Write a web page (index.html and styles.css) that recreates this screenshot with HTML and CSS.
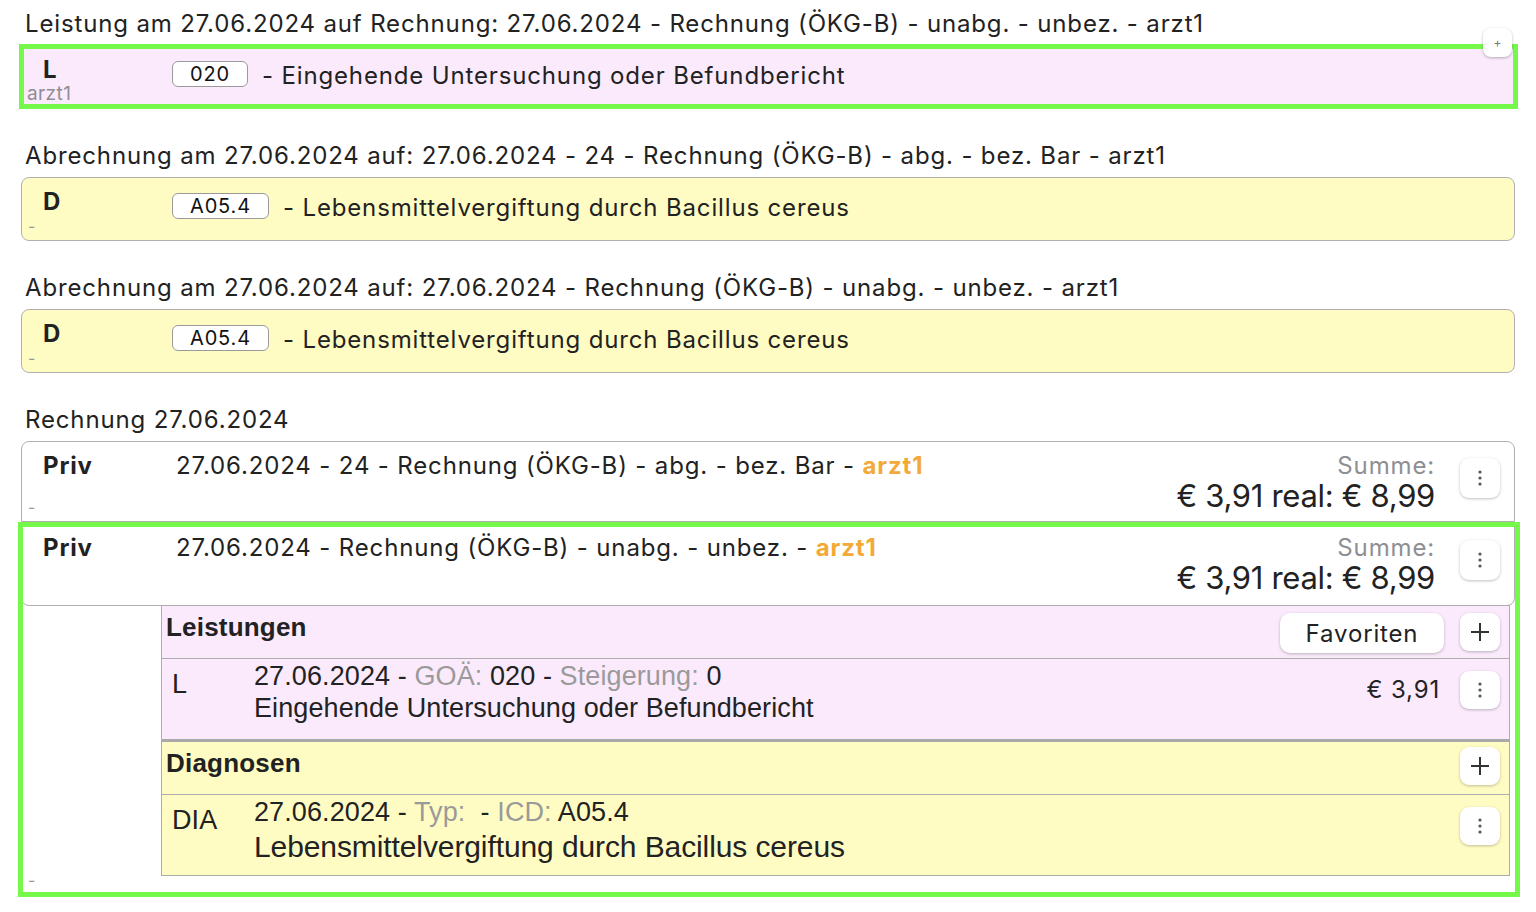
FILE: index.html
```html
<!DOCTYPE html>
<html lang="de">
<head>
<meta charset="utf-8">
<title>Rechnung</title>
<link rel="stylesheet" href="styles.css">
</head>
<body>
<main class="page">

  <section class="group first">
    <div class="ghead">Leistung am 27.06.2024 auf Rechnung: 27.06.2024 - Rechnung (ÖKG-B) - unabg. - unbez. - arzt1</div>
    <div class="entry pink sel sel-a">
      <div class="e-left"><span class="e-type">L</span><span class="e-by">arzt1</span></div>
      <div class="e-main"><span class="code">020</span><span class="e-text">- Eingehende Untersuchung oder Befundbericht</span></div>
      <button class="mini-add" type="button">+</button>
    </div>
  </section>

  <section class="group">
    <div class="ghead">Abrechnung am 27.06.2024 auf: 27.06.2024 - 24 - Rechnung (ÖKG-B) - abg. - bez. Bar - arzt1</div>
    <div class="entry yellow">
      <div class="e-left"><span class="e-type">D</span><span class="e-by dash">-</span></div>
      <div class="e-main"><span class="code">A05.4</span><span class="e-text">- Lebensmittelvergiftung durch Bacillus cereus</span></div>
    </div>
  </section>

  <section class="group">
    <div class="ghead">Abrechnung am 27.06.2024 auf: 27.06.2024 - Rechnung (ÖKG-B) - unabg. - unbez. - arzt1</div>
    <div class="entry yellow">
      <div class="e-left"><span class="e-type">D</span><span class="e-by dash">-</span></div>
      <div class="e-main"><span class="code">A05.4</span><span class="e-text">- Lebensmittelvergiftung durch Bacillus cereus</span></div>
    </div>
  </section>

  <section class="group">
    <div class="ghead">Rechnung 27.06.2024</div>

    <div class="card">
      <div class="c-left"><span class="c-type">Priv</span><span class="dash">-</span></div>
      <div class="c-main">27.06.2024 - 24 - Rechnung (ÖKG-B) - abg. - bez. Bar - <b class="who">arzt1</b></div>
      <div class="c-sum"><div class="sum-label">Summe:</div><div class="sum-val">€ 3,91 real: € 8,99</div></div>
      <button class="icon-btn kebab" type="button"><svg width="6" height="18" viewBox="0 0 6 18"><circle cx="3" cy="3" r="1.6"/><circle cx="3" cy="9" r="1.6"/><circle cx="3" cy="15" r="1.6"/></svg></button>
    </div>

    <div class="item sel sel-b">
      <div class="card card-open">
        <div class="c-left"><span class="c-type">Priv</span></div>
        <div class="c-main">27.06.2024 - Rechnung (ÖKG-B) - unabg. - unbez. - <b class="who">arzt1</b></div>
        <div class="c-sum"><div class="sum-label">Summe:</div><div class="sum-val">€ 3,91 real: € 8,99</div></div>
        <button class="icon-btn kebab" type="button"><svg width="6" height="18" viewBox="0 0 6 18"><circle cx="3" cy="3" r="1.6"/><circle cx="3" cy="9" r="1.6"/><circle cx="3" cy="15" r="1.6"/></svg></button>
      </div>

      <div class="details">
        <div class="sub pink sub-l">
          <div class="sub-head">
            <span class="sub-title">Leistungen</span>
            <button class="fav-btn" type="button">Favoriten</button>
            <button class="icon-btn add" type="button"><svg width="20" height="20" viewBox="0 0 20 20"><path d="M10 1v18M1 10h18"/></svg></button>
          </div>
          <div class="sub-row">
            <div class="r-type">L</div>
            <div class="r-main">
              <div class="r-l1">27.06.2024 - <span class="muted">GOÄ:</span> 020 - <span class="muted">Steigerung:</span> 0</div>
              <div class="r-l2">Eingehende Untersuchung oder Befundbericht</div>
            </div>
            <div class="r-price">€ 3,91</div>
            <button class="icon-btn kebab r-kebab" type="button"><svg width="6" height="18" viewBox="0 0 6 18"><circle cx="3" cy="3" r="1.6"/><circle cx="3" cy="9" r="1.6"/><circle cx="3" cy="15" r="1.6"/></svg></button>
          </div>
        </div>

        <div class="sub yellow sub-d">
          <div class="sub-head">
            <span class="sub-title">Diagnosen</span>
            <button class="icon-btn add" type="button"><svg width="20" height="20" viewBox="0 0 20 20"><path d="M10 1v18M1 10h18"/></svg></button>
          </div>
          <div class="sub-row">
            <div class="r-type">DIA</div>
            <div class="r-main">
              <div class="r-l1">27.06.2024 - <span class="muted">Typ:</span>&nbsp; - <span class="muted">ICD:</span> A05.4</div>
              <div class="r-l2 big">Lebensmittelvergiftung durch Bacillus cereus</div>
            </div>
            <button class="icon-btn kebab r-kebab" type="button"><svg width="6" height="18" viewBox="0 0 6 18"><circle cx="3" cy="3" r="1.6"/><circle cx="3" cy="9" r="1.6"/><circle cx="3" cy="15" r="1.6"/></svg></button>
          </div>
        </div>
      </div>

      <div class="item-foot"><span class="dash">-</span></div>
    </div>
  </section>

</main>
</body>
</html>
```

FILE: styles.css
```css
* { box-sizing: border-box; }

html, body {
  margin: 0;
  padding: 0;
  background: #ffffff;
}

body {
  font-family: Inter, "Noto Sans", "Liberation Sans", sans-serif;
  color: #222222;
  font-size: 24px;
  letter-spacing: 0.85px;
}

.page {
  padding: 0 21px;
}

button {
  font-family: inherit;
  color: inherit;
  letter-spacing: inherit;
  padding: 0;
  margin: 0;
  cursor: pointer;
}

.group { margin-top: 32px; }
.group.first { margin-top: 9px; }

.ghead {
  height: 30px;
  line-height: 30px;
  margin-bottom: 6px;
  padding-left: 4px;
  font-size: 24px;
  white-space: nowrap;
}

.pink { background: #faeafc; }
.yellow { background: #fffcc3; }

/* selection frame */
.sel { position: relative; }
.sel::after {
  content: "";
  position: absolute;
  border: 5px solid #76f84b;
  pointer-events: none;
  z-index: 1;
}
.sel-a::after { top: -2px; right: -4px; bottom: -1px; left: -3px; }
.sel-b::after { top: 0; right: -5px; bottom: 0; left: -3px; }

/* simple entries */
.entry {
  position: relative;
  display: flex;
  height: 64px;
  border: 1px solid #b0b0b0;
  border-radius: 8px;
}

.e-left {
  width: 150px;
  flex: none;
  display: flex;
  flex-direction: column;
  padding: 10px 0 0 5px;
}

.e-type {
  margin-left: 16px;
  font-weight: 700;
  font-size: 24px;
  line-height: 28px;
}

.e-by {
  font-size: 19px;
  line-height: 20px;
  letter-spacing: 0.4px;
  color: #8e8e93;
}

.dash {
  font-size: 16px;
  line-height: 20px;
  color: #9a9a9a;
  padding-left: 1px;
}

.e-main {
  display: flex;
  align-items: center;
  height: 26px;
  margin-top: 15px;
}

.code {
  display: inline-block;
  height: 26px;
  line-height: 24px;
  padding: 0 17px;
  border: 1px solid #9a9a9a;
  border-radius: 6px;
  background: #ffffff;
  font-size: 20px;
  color: #111111;
}

.e-text {
  margin-left: 14px;
  font-size: 24px;
  line-height: 30px;
  padding-top: 3px;
  white-space: nowrap;
}

.mini-add {
  position: absolute;
  top: -18px;
  right: 2px;
  width: 29px;
  height: 29px;
  border: none;
  border-radius: 8px;
  background: #ffffff;
  box-shadow: 0 1px 3px rgba(0, 0, 0, 0.28);
  font-size: 12px;
  line-height: 29px;
  letter-spacing: 0;
  color: #777777;
  z-index: 2;
}

/* invoice cards */
.card {
  display: flex;
  height: 81px;
  border: 1px solid #b0b0b0;
  border-radius: 8px 8px 0 0;
  background: #ffffff;
}

.card-open {
  height: 84px;
  margin-top: 0;
  border-radius: 0 0 8px 8px;
}

.c-left {
  width: 154px;
  flex: none;
  display: flex;
  flex-direction: column;
  justify-content: space-between;
  padding: 10px 0 4px 5px;
}

.card-open .c-left { padding-top: 11px; }

.c-type {
  margin-left: 16px;
  font-weight: 700;
  font-size: 24px;
  line-height: 28px;
}

.c-main {
  flex: 1;
  padding-top: 10px;
  font-size: 24px;
  line-height: 28px;
  white-space: nowrap;
}

.card-open .c-main { padding-top: 11px; }

.who {
  color: #f3a937;
  font-weight: 700;
}

.c-sum {
  text-align: right;
  padding-top: 10px;
}

.card-open .c-sum { padding-top: 11px; }

.sum-label {
  font-size: 24px;
  line-height: 28px;
  color: #8e8e93;
}

.sum-val {
  font-size: 31px;
  line-height: 32px;
  letter-spacing: -0.3px;
  white-space: nowrap;
}

.icon-btn {
  width: 40px;
  height: 40px;
  border: none;
  border-radius: 9px;
  background: #ffffff;
  box-shadow: 0 1px 3px rgba(0, 0, 0, 0.25);
  display: flex;
  align-items: center;
  justify-content: center;
  flex: none;
}

.kebab svg { fill: #555555; }

.card .kebab {
  margin: 16px 14px 0 25px;
}
.card-open .kebab { margin-top: 17px; }

.add svg {
  stroke: #333333;
  stroke-width: 2;
  fill: none;
}

/* expanded details */
.item {
  padding-bottom: 7px;
}

.details {
  margin: -1px 5px 0 140px;
}

.sub {
  border: 1px solid #adadad;
}

.sub-l { border-bottom: 3px solid #a9a9a9; }
.sub-d { border-top: none; }

.sub-head {
  display: flex;
  align-items: flex-start;
  height: 53px;
  padding: 6px 9px 0 4px;
  border-bottom: 1px solid #adadad;
}

.sub-title {
  flex: 1;
  font-family: "Liberation Sans", Arial, sans-serif;
  font-weight: 700;
  font-size: 26px;
  line-height: 30px;
  letter-spacing: 0.2px;
  color: #222222;
}

.fav-btn {
  width: 164px;
  height: 40px;
  margin-top: 1px;
  border: none;
  border-radius: 10px;
  background: #ffffff;
  box-shadow: 0 1px 3px rgba(0, 0, 0, 0.25);
  font-size: 24px;
  color: #222222;
}

.sub-head .add {
  height: 38px;
  margin-left: 16px;
  margin-top: 1px;
}

.sub-d .sub-head .add { margin-top: -1px; }

.sub-row {
  display: flex;
  align-items: flex-start;
  height: 80px;
  padding: 0 9px 0 10px;
  font-family: "Liberation Sans", Arial, sans-serif;
  font-size: 27px;
  letter-spacing: 0.1px;
  color: #222222;
}

.r-type {
  width: 82px;
  flex: none;
  line-height: 32px;
  padding-top: 9px;
}

.r-main {
  flex: 1;
  padding-top: 1px;
  white-space: nowrap;
}

.sub-d .r-main { padding-top: 0; }

.r-l1, .r-l2 { line-height: 32px; }
.sub-d .r-l1 { line-height: 34px; }
.r-l2.big { font-size: 30px; line-height: 36px; letter-spacing: -0.1px; }

.muted { color: #9a9a9a; }

.r-price {
  padding-top: 15px;
  margin-right: 20px;
  line-height: 32px;
  font-family: Inter, "Noto Sans", sans-serif;
  font-size: 24px;
  letter-spacing: 0.85px;
}

.r-kebab {
  height: 38px;
  margin-top: 12px;
}

.item-foot {
  height: 22px;
  margin-top: -8px;
  padding-left: 6px;
  line-height: 20px;
}
```
